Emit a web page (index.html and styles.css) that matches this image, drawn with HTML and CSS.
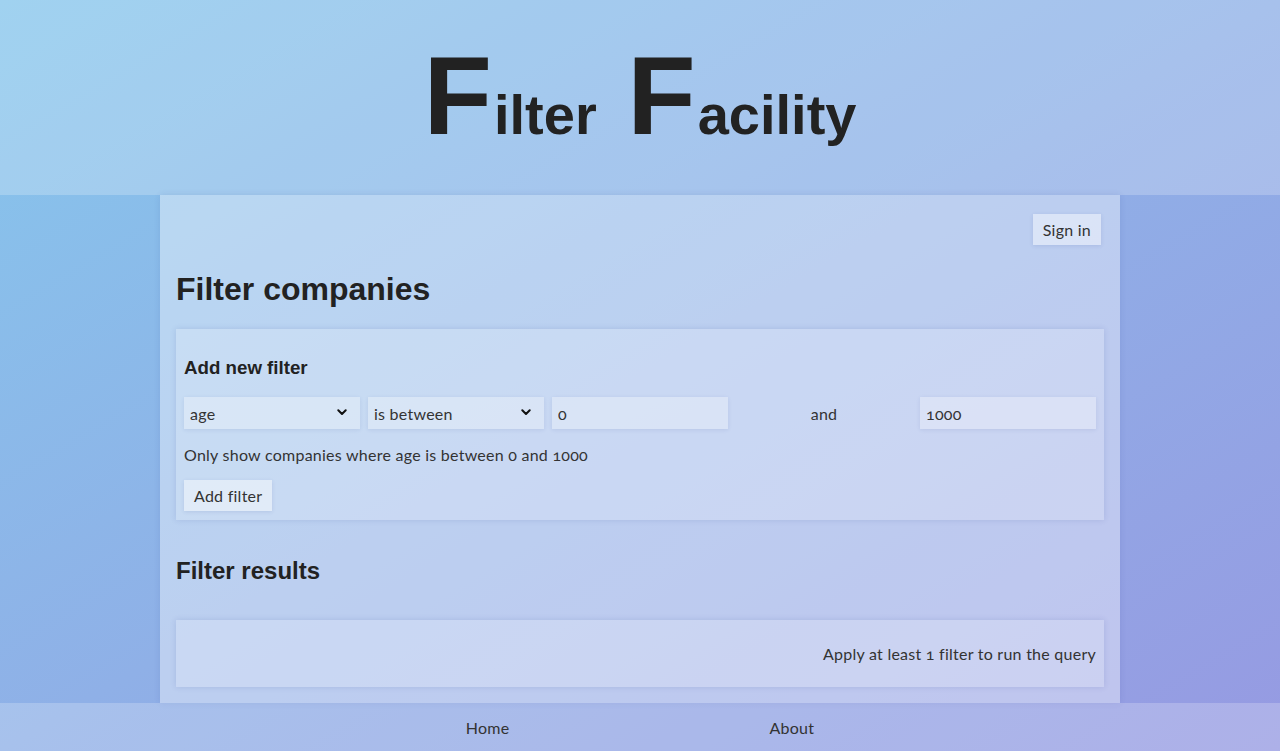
FILE: index.html
```html
<!DOCTYPE html>
<html lang="en">
<head>
<meta charset="utf-8">
<title>Filter Facility</title>
<link rel="stylesheet" href="styles.css">
</head>
<body>
<header class="site-header">
  <h1 class="brand"><span class="cap">F</span>ilter <span class="cap">F</span>acility</h1>
</header>
<main class="page">
  <div class="topbar">
    <button class="btn">Sign in</button>
  </div>
  <h1 class="page-title">Filter companies</h1>
  <section class="card">
    <h3 class="card-title">Add new filter</h3>
    <div class="filter-row">
      <div class="select-wrap">
        <select class="field"><option>age</option></select>
        <svg class="chev" width="10" height="7" viewBox="0 0 10 7"><path d="M1.3 1.3 L5 5 L8.7 1.3" fill="none" stroke="#111" stroke-width="2" stroke-linecap="round" stroke-linejoin="round"/></svg>
      </div>
      <div class="select-wrap">
        <select class="field"><option>is between</option></select>
        <svg class="chev" width="10" height="7" viewBox="0 0 10 7"><path d="M1.3 1.3 L5 5 L8.7 1.3" fill="none" stroke="#111" stroke-width="2" stroke-linecap="round" stroke-linejoin="round"/></svg>
      </div>
      <input class="field" type="text" value="0">
      <span class="and">and</span>
      <input class="field" type="text" value="1000">
    </div>
    <p class="summary">Only show companies where age is between 0 and 1000</p>
    <button class="btn">Add filter</button>
  </section>
  <h2 class="section-title">Filter results</h2>
  <section class="card results">
    <p class="empty">Apply at least 1 filter to run the query</p>
  </section>
</main>
<footer class="site-footer">
  <a href="#" class="foot-link">Home</a>
  <a href="#" class="foot-link">About</a>
</footer>
</body>
</html>
```

FILE: styles.css
```css
html {
  background: linear-gradient(to bottom right, #86c6ec 0%, #8fb0e7 50%, #969ae2 100%);
  min-height: 100%;
}
body {
  margin: 0;
  font-family: Lato, "Open Sans", sans-serif;
  font-variant-numeric: oldstyle-nums;
  color: #333;
  font-size: 16px;
  letter-spacing: 0.25px;
}
.site-header {
  height: 195px;
  box-sizing: border-box;
  padding-top: 40px;
  background: rgba(255, 255, 255, 0.22);
}
.brand {
  margin: 0;
  text-align: center;
  font-family: "Liberation Sans", Arial, sans-serif;
  font-weight: bold;
  font-size: 56px;
  line-height: 1;
  color: #222;
  letter-spacing: 0;
  word-spacing: 15px;
  font-variant-numeric: normal;
}
.brand .cap {
  font-size: 2em;
  margin-right: 2px;
}
.page {
  width: 960px;
  box-sizing: border-box;
  margin: 0 auto;
  padding: 19px 16px 16px;
  background: rgba(255, 255, 255, 0.4);
  box-shadow: 0 0 6px rgba(40, 60, 140, 0.12);
}
.topbar {
  display: flex;
  justify-content: flex-end;
  padding-right: 3px;
}
.btn {
  font-family: inherit;
  font-size: 16px;
  letter-spacing: inherit;
  color: #333;
  height: 31px;
  padding: 0 10px;
  border: none;
  background: rgba(255, 255, 255, 0.45);
  box-shadow: 0 1px 4px rgba(40, 60, 140, 0.12);
  cursor: pointer;
}
.page-title {
  font-family: "Liberation Sans", Arial, sans-serif;
  font-size: 32px;
  letter-spacing: 0;
  color: #222;
  margin: 26px 0 21px;
}
.card {
  padding: 8px 8px 9px;
  background: rgba(255, 255, 255, 0.2);
  box-shadow: 0 0 6px rgba(40, 60, 140, 0.14);
}
.card-title {
  font-family: "Liberation Sans", Arial, sans-serif;
  font-size: 18.72px;
  letter-spacing: 0;
  color: #222;
  margin: 19.7px 0 18.7px;
}
.filter-row {
  display: grid;
  grid-template-columns: repeat(5, 1fr);
  gap: 8px;
  align-items: center;
}
.select-wrap {
  position: relative;
}
.field {
  display: block;
  width: 100%;
  box-sizing: border-box;
  height: 32px;
  border: none;
  border-radius: 0;
  padding: 0 6px;
  font-family: inherit;
  font-size: 16px;
  letter-spacing: inherit;
  color: #333;
  background: rgba(255, 255, 255, 0.3);
  box-shadow: 0 1px 4px rgba(40, 60, 140, 0.1);
  appearance: none;
  -webkit-appearance: none;
  font-variant-numeric: oldstyle-nums;
  outline: none;
}
.chev {
  position: absolute;
  right: 13px;
  top: 12px;
  pointer-events: none;
}
.and {
  text-align: center;
}
.summary {
  margin: 16px 0;
  line-height: 19px;
}
.section-title {
  font-family: "Liberation Sans", Arial, sans-serif;
  font-size: 24px;
  letter-spacing: 0;
  color: #222;
  margin: 37px 0 35px;
}
.results {
  padding-bottom: 8px;
}
.results .empty {
  margin: 16px 0;
  line-height: 19px;
  text-align: right;
}
.site-footer {
  height: 48px;
  display: flex;
  justify-content: center;
  align-items: center;
  gap: 260px;
  background: rgba(255, 255, 255, 0.22);
}
.foot-link {
  color: #333;
  text-decoration: none;
}
```
